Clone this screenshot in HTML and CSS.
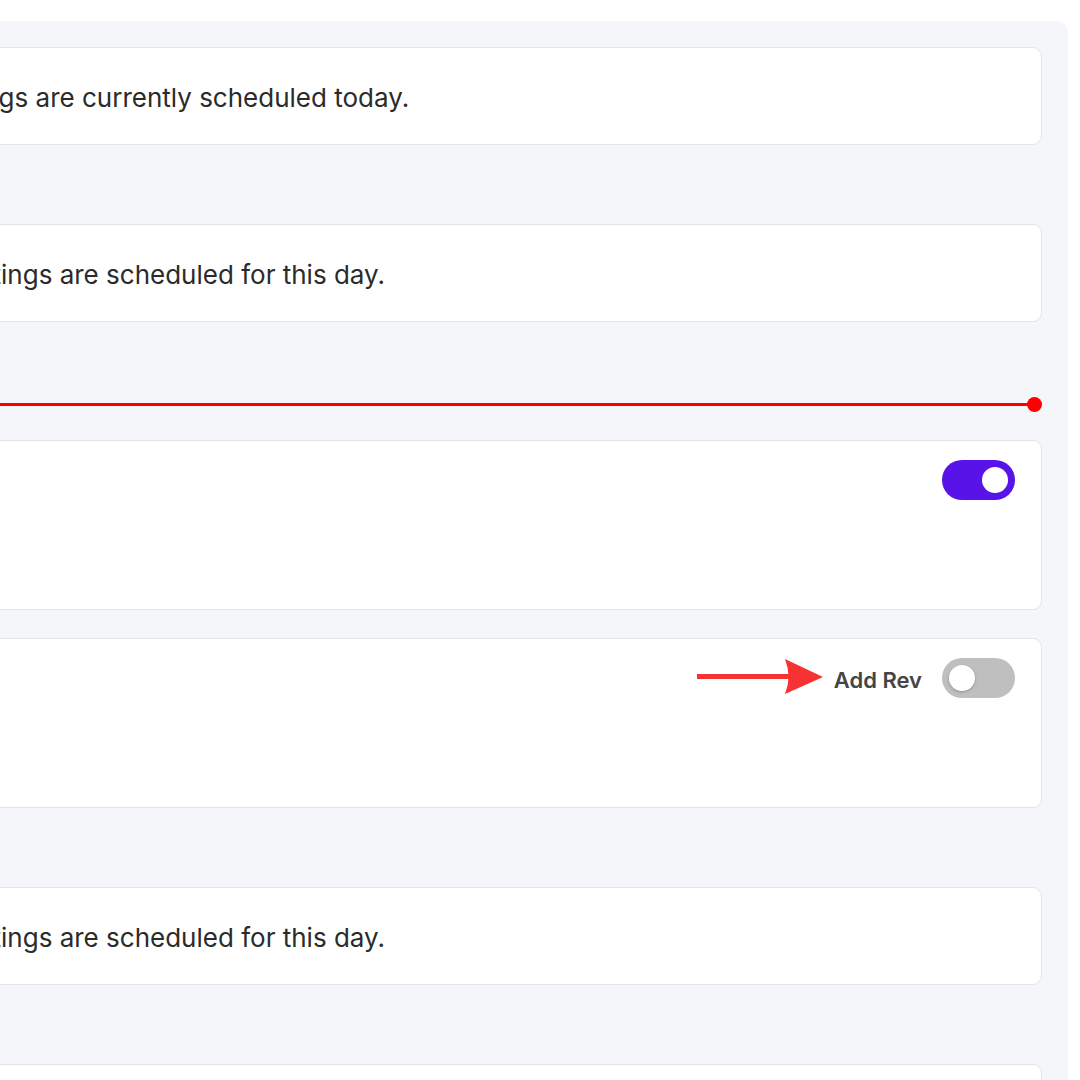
FILE: index.html
```html
<!DOCTYPE html>
<html lang="en">
<head>
<meta charset="utf-8">
<title>Schedule</title>
<link rel="stylesheet" href="styles.css">
</head>
<body>
<div class="panel">
  <section class="day">
    <div class="card empty"><p>No meetings are currently scheduled today.</p></div>
  </section>
  <section class="day">
    <div class="card empty"><p>No meetings are scheduled for this day.</p></div>
  </section>
  <section class="day">
    <div class="now-line"><span class="line"></span><span class="dot"></span></div>
    <div class="card event">
      <div class="event-head">
        <span class="toggle on"><span class="knob"></span></span>
      </div>
    </div>
    <div class="card event">
      <div class="event-head">
        <svg class="arrow" width="128" height="38" viewBox="0 0 128 38" aria-hidden="true">
          <rect x="0" y="16" width="92" height="5" fill="#f73232"/>
          <path d="M88 1 L126 19 L88 36 Q95 19 88 1 Z" fill="#f73232"/>
        </svg>
        <span class="label">Add Rev</span>
        <span class="toggle off"><span class="knob"></span></span>
      </div>
    </div>
  </section>
  <section class="day">
    <div class="card empty"><p>No meetings are scheduled for this day.</p></div>
  </section>
  <section class="day">
    <div class="card empty"><p>No meetings are scheduled for this day.</p></div>
  </section>
</div>
</body>
</html>
```

FILE: styles.css
```css
html, body {
  margin: 0;
  padding: 0;
  background: #ffffff;
  overflow: hidden;
  height: 1080px;
}

body {
  font-family: Inter, "Noto Sans", "Liberation Sans", sans-serif;
  color: #2b2b2b;
}

.panel {
  margin-top: 21px;
  margin-left: -760px;
  width: 1828px;
  box-sizing: border-box;
  background: #f5f6fa;
  border-radius: 0 12px 0 0;
  padding: 26px 26px 0 0;
  display: flex;
  flex-direction: column;
  gap: 79px;
  min-height: 1100px;
}

.day {
  display: flex;
  flex-direction: column;
  gap: 28px;
}

.card {
  background: #ffffff;
  border: 1px solid #e3e4e8;
  border-radius: 9px;
  box-sizing: border-box;
}

.card.empty {
  height: 98px;
  display: flex;
  align-items: center;
  justify-content: center;
}

.card.empty p {
  margin: 4px 0 0;
  font-size: 26px;
  line-height: 1;
}

.now-line {
  height: 16px;
  margin-top: -5px;
  display: flex;
  align-items: center;
}

.now-line .line {
  flex: 1;
  height: 3px;
  background: #ff0000;
}

.now-line .dot {
  width: 15px;
  height: 15px;
  border-radius: 50%;
  background: #ff0000;
  margin-left: -4px;
}

.card.event {
  height: 170px;
  padding: 19px 26px 0 0;
}

.event-head {
  display: flex;
  justify-content: flex-end;
  align-items: center;
}

.arrow {
  display: block;
  margin-right: 9px;
  margin-top: -2px;
}

.label {
  font-size: 22px;
  font-weight: 600;
  color: #454545;
  margin-right: 20px;
  padding-top: 3px;
}

.toggle {
  position: relative;
  width: 73px;
  height: 40px;
  border-radius: 20px;
  display: block;
  flex: none;
}

.toggle.on {
  background: #5814e8;
}

.toggle.off {
  background: #bfbfbf;
}

.knob {
  position: absolute;
  top: 7px;
  width: 26px;
  height: 26px;
  border-radius: 50%;
  background: #ffffff;
}

.toggle.on .knob {
  right: 7px;
}

.toggle.off .knob {
  left: 7px;
  box-shadow: 0 1px 3px rgba(0, 0, 0, 0.25);
}
```
